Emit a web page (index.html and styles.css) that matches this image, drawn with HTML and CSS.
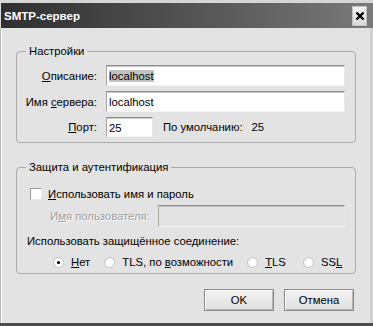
FILE: index.html
```html
<!DOCTYPE html>
<html lang="ru">
<head>
  <meta charset="UTF-8" />
  <title>SMTP-сервер</title>
  <link rel="stylesheet" href="styles.css">
</head>
<body>
  <div class="window">
    <div class="titlebar">
      <span class="title">SMTP-сервер</span>
      <span class="close">
        <svg width="10" height="10" viewBox="0 0 10 10"><path d="M1.5 1.5L8.5 8.5M8.5 1.5L1.5 8.5" stroke="#000" stroke-width="2.4"/></svg>
      </span>
    </div>

    <div class="content">
      <fieldset class="group group-settings">
        <legend>Настройки</legend>
        <div class="form-grid">
          <span class="lbl"><u>О</u>писание:</span>
          <div class="field"><span class="selected">localhost</span></div>
          <span class="lbl">Имя <u>с</u>ервера:</span>
          <div class="field">localhost</div>
          <span class="lbl"><u>П</u>орт:</span>
          <div class="port-row">
            <div class="field field-port">25</div>
            <span class="default-lbl">По умолчанию:</span>
            <span>25</span>
          </div>
        </div>
      </fieldset>

      <fieldset class="group group-security">
        <legend>Защита и аутентификация</legend>
        <div class="check-row">
          <span class="checkbox"></span>
          <span><u>И</u>спользовать имя и пароль</span>
        </div>
        <div class="user-row">
          <span class="disabled">И<u>м</u>я пользователя:</span>
          <div class="field field-disabled"></div>
        </div>
        <div class="secure-lbl">Использовать защищённое соединение:</div>
        <div class="radio-row">
          <span class="radio-item"><span class="radio checked"></span><span><u>Н</u>ет</span></span>
          <span class="radio-item"><span class="radio"></span><span>TLS, по <u>в</u>озможности</span></span>
          <span class="radio-item"><span class="radio"></span><span><u>T</u>LS</span></span>
          <span class="radio-item"><span class="radio"></span><span>SS<u>L</u></span></span>
        </div>
      </fieldset>

      <div class="buttons">
        <span class="btn">OK</span>
        <span class="btn">Отмена</span>
      </div>
    </div>
  </div>
</body>
</html>
```

FILE: styles.css
```css
body {
  margin: 0;
  font-family: 'Liberation Sans', Arial, sans-serif;
  font-size: 11.3px;
  color: #000;
  background-color: #e3e3e3;
  white-space: nowrap;
}

.window {
  width: 373px;
  height: 326px;
  box-sizing: border-box;
  display: flex;
  flex-direction: column;
  background-color: #dcdcdc;
  border-top: 3px solid #d6d6d6;
  border-bottom: 3px solid #4c4c4c;
}

.titlebar {
  height: 25px;
  flex: none;
  display: flex;
  align-items: center;
  justify-content: space-between;
  margin-left: 1px;
  padding: 0 6px 0 3px;
  background: linear-gradient(to right, #2f2f2f, #5a5a5a 60%, #7a7a7a);
}

.title {
  color: #fff;
  font-weight: bold;
  font-size: 11.5px;
}

.close {
  width: 15px;
  height: 20px;
  display: flex;
  align-items: center;
  justify-content: center;
  background: linear-gradient(#f4f4f4, #d8d8d8);
  box-shadow: inset 0 0 0 1px #c4c4c4;
}

.content {
  flex: 1;
  min-height: 0;
  padding: 0 14px 0 15px;
  border-left: 1px solid #b8b8b8;
  border-right: 3px solid #cfcfcf;
  box-shadow: inset 1px 0 0 #fff;
  background-color: #e3e3e3;
}

.group {
  margin: 0;
  padding: 0 10px 5px 8px;
  border: 1px solid #a9a9a9;
  border-radius: 4px;
}

.group legend {
  padding: 0 3px;
  margin-left: 1px;
  line-height: 14px;
}

.group-settings {
  margin-top: 16px;
}

.form-grid {
  display: grid;
  grid-template-columns: 72px 1fr;
  column-gap: 9px;
  row-gap: 5px;
  margin-top: 7px;
  align-items: center;
}

.lbl {
  text-align: right;
}

.field {
  height: 21px;
  box-sizing: border-box;
  padding: 3px 2px 0;
  background-color: #fff;
  border: 1px solid;
  border-color: #8e8e8e #e8e8e8 #f4f4f4 #a6a6a6;
  box-shadow: inset 0 1px 0 #c8c8c8;
  line-height: 15px;
}

.selected {
  background-color: #c2c2c2;
}

.port-row {
  display: flex;
  align-items: center;
}

.field-port {
  width: 47px;
  height: 20px;
}

.default-lbl {
  margin: 0 9px 0 10px;
}

.group-security {
  margin-top: 17px;
  padding-bottom: 4px;
}

.check-row {
  display: flex;
  align-items: center;
  gap: 6px;
  height: 16px;
  margin: 12px 0 0 5px;
}

.checkbox {
  width: 12px;
  height: 12px;
  box-sizing: border-box;
  background-color: #fff;
  border: 1px solid;
  border-color: #9c9c9c #e8e8e8 #e8e8e8 #9c9c9c;
}

.user-row {
  display: flex;
  align-items: center;
  margin-top: 3px;
  padding-left: 25px;
}

.disabled {
  width: 108px;
  flex: none;
  color: #9d9d9d;
  text-shadow: 1px 1px 0 #fff;
}

.field-disabled {
  flex: 1;
  height: 22px;
  background-color: #e3e3e3;
}

.secure-lbl {
  margin: 7px 0 0 2px;
  line-height: 14px;
}

.radio-row {
  display: flex;
  align-items: center;
  gap: 14px;
  margin: 7px 0 0 28px;
  line-height: 14px;
}

.radio-item {
  display: flex;
  align-items: center;
  gap: 7px;
}

.radio-item:last-child {
  margin-left: 3px;
}

.radio {
  width: 11px;
  height: 11px;
  box-sizing: border-box;
  border-radius: 50%;
  background: radial-gradient(circle at 60% 60%, #fff 45%, #e6e6e6);
  border: 1px solid #c4c4c4;
  position: relative;
}

.radio.checked::after {
  content: "";
  position: absolute;
  left: 3px;
  top: 3px;
  width: 3px;
  height: 3px;
  border-radius: 50%;
  background-color: #000;
}

.buttons {
  display: flex;
  justify-content: flex-end;
  gap: 10px;
  margin: 15px 2px 0 0;
}

.btn {
  width: 70px;
  height: 22px;
  box-sizing: border-box;
  display: flex;
  align-items: center;
  justify-content: center;
  background: linear-gradient(#f2f2f2, #e0e0e0);
  border: 1px solid #8a8a8a;
  box-shadow: inset 1px 1px 0 #fff, inset -1px -1px 0 #b4b4b4;
}
```
